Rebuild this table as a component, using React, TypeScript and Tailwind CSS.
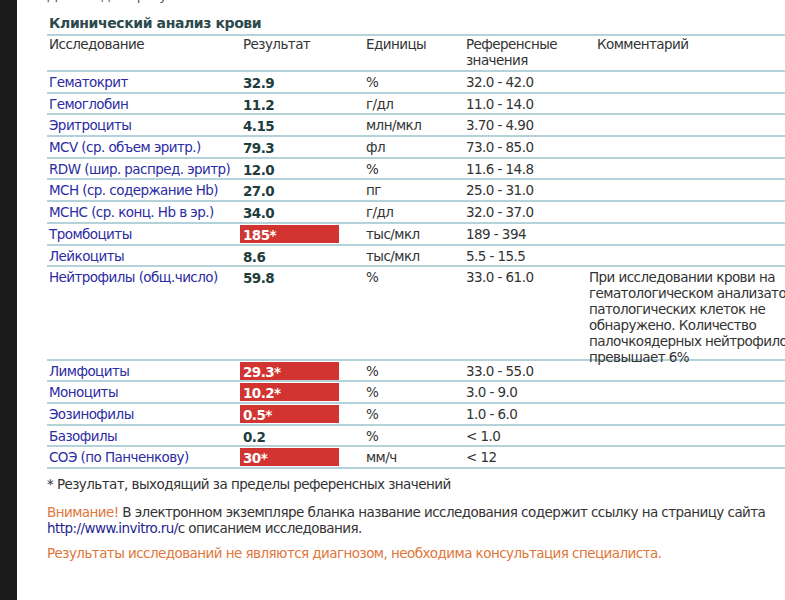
type Row = {
  name: string;
  value: string;
  unit: string;
  range: string;
  flag?: boolean;
  comment?: string[];
};

const rows: Row[] = [
  { name: "Гематокрит", value: "32.9", unit: "%", range: "32.0 - 42.0" },
  { name: "Гемоглобин", value: "11.2", unit: "г/дл", range: "11.0 - 14.0" },
  { name: "Эритроциты", value: "4.15", unit: "млн/мкл", range: "3.70 - 4.90" },
  { name: "MCV (ср. объем эритр.)", value: "79.3", unit: "фл", range: "73.0 - 85.0" },
  { name: "RDW (шир. распред. эритр)", value: "12.0", unit: "%", range: "11.6 - 14.8" },
  { name: "MCH (ср. содержание Hb)", value: "27.0", unit: "пг", range: "25.0 - 31.0" },
  { name: "MCHC (ср. конц. Hb в эр.)", value: "34.0", unit: "г/дл", range: "32.0 - 37.0" },
  { name: "Тромбоциты", value: "185*", unit: "тыс/мкл", range: "189 - 394", flag: true },
  { name: "Лейкоциты", value: "8.6", unit: "тыс/мкл", range: "5.5 - 15.5" },
  {
    name: "Нейтрофилы (общ.число)",
    value: "59.8",
    unit: "%",
    range: "33.0 - 61.0",
    comment: [
      "При исследовании крови на",
      "гематологическом анализаторе",
      "патологических клеток не",
      "обнаружено. Количество",
      "палочкоядерных нейтрофилов не",
      "превышает 6%",
    ],
  },
  { name: "Лимфоциты", value: "29.3*", unit: "%", range: "33.0 - 55.0", flag: true },
  { name: "Моноциты", value: "10.2*", unit: "%", range: "3.0 - 9.0", flag: true },
  { name: "Эозинофилы", value: "0.5*", unit: "%", range: "1.0 - 6.0", flag: true },
  { name: "Базофилы", value: "0.2", unit: "%", range: "< 1.0" },
  { name: "СОЭ (по Панченкову)", value: "30*", unit: "мм/ч", range: "< 12", flag: true },
];

const cols = "grid grid-cols-[193px_123px_100px_126px_1fr]";

function ResultRow({ row }: { row: Row }) {
  const tall = !!row.comment;
  return (
    <div
      className={`${cols} ${tall ? "h-[93.5px]" : "h-[21.7px]"} border-b-2 border-[#b3d2d9] leading-[16px]`}
    >
      <div className="pl-[2px] pt-[2px] text-[#2c2ca3] whitespace-nowrap">{row.name}</div>
      <div className="pt-[1px]">
        {row.flag ? (
          <div className="w-[99px] h-[18px] bg-[#d23431] pl-[3px] pt-[2px] font-bold text-white leading-[16px]">
            {row.value}
          </div>
        ) : (
          <div className="pl-[3px] pt-[2px] font-bold text-[#1f3d3d] leading-[16px]">{row.value}</div>
        )}
      </div>
      <div className="pl-[3px] pt-[2px] text-[#333]">{row.unit}</div>
      <div className="pl-[3px] pt-[2px] text-[#333] whitespace-nowrap">{row.range}</div>
      <div className="pt-[2px] text-[#333] whitespace-nowrap">
        {row.comment ? row.comment.map((line) => <div key={line}>{line}</div>) : null}
      </div>
    </div>
  );
}

export default function App() {
  return (
    <div className="flex h-[600px] w-[785px] overflow-hidden bg-white font-['DejaVu_Sans',sans-serif] text-[13.5px] tracking-[-0.56px]">
      <div className="w-[17px] shrink-0 bg-[#1c1c1c]" />
      <div className="min-w-0 flex-1 pl-[30px]">
        <div className="h-[3px] overflow-hidden">
          <div className="-mt-[12px] leading-[14px] text-[#555]">Дата выдачи результата</div>
        </div>
        <div className="w-[800px]">
          <h2 className="mt-[11px] mb-[2px] pl-[2px] text-[14px] font-bold leading-[18px] tracking-[-0.4px] text-[#2c4a4d]">
            Клинический анализ крови
          </h2>
          <div className={`${cols} border-y-2 border-[#b3d2d9] pb-[2px] leading-[16px] text-[#333]`}>
            <div className="pl-[2px]">Исследование</div>
            <div className="pl-[3px]">Результат</div>
            <div className="pl-[3px]">Единицы</div>
            <div className="pl-[3px]">
              Референсные
              <br />
              значения
            </div>
            <div className="pl-[8px]">Комментарий</div>
          </div>
          {rows.map((r) => (
            <ResultRow key={r.name} row={r} />
          ))}
        </div>
        <div className="mt-[7px] leading-[16px] text-[#333]">
          * Результат, выходящий за пределы референсных значений
        </div>
        <div className="mt-[12px] whitespace-nowrap leading-[16px] text-[#333]">
          <span className="text-[#e0763a]">Внимание!</span> В электронном экземпляре бланка название
          исследования содержит ссылку на страницу сайта
          <br />
          <span className="text-[#1f1f8f]">http://www.invitro.ru/</span>с описанием исследования.
        </div>
        <div className="mt-[9px] leading-[16px] text-[#e0763a]">
          Результаты исследований не являются диагнозом, необходима консультация специалиста.
        </div>
      </div>
    </div>
  );
}
